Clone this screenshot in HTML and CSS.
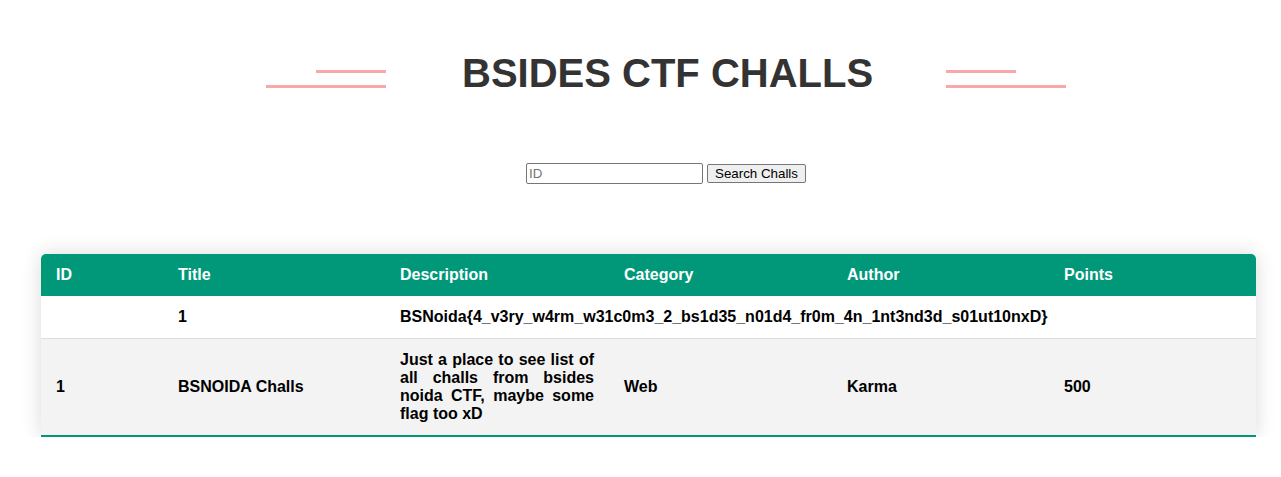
FILE: index.html
```html
<!DOCTYPE html>
<html lang="en">
<head>
<meta charset="utf-8">
<title>BSIDES CTF CHALLS</title>
<link rel="stylesheet" href="styles.css">
</head>
<body>
<header class="hero">
  <div class="deco deco-left"><span class="line short"></span><span class="line long"></span></div>
  <h1 class="title">BSIDES CTF CHALLS</h1>
  <div class="deco deco-right"><span class="line short"></span><span class="line long"></span></div>
</header>
<form class="search" onsubmit="return false">
  <input class="search-input" type="text" name="id" placeholder="ID">
  <button class="search-btn" type="submit">Search Challs</button>
</form>
<table class="styled-table">
  <colgroup>
    <col class="c-id"><col class="c-title"><col class="c-desc"><col class="c-cat"><col class="c-author"><col class="c-points">
  </colgroup>
  <thead>
    <tr><th>ID</th><th>Title</th><th>Description</th><th>Category</th><th>Author</th><th>Points</th></tr>
  </thead>
  <tbody>
    <tr><td></td><td>1</td><td class="flag">BSNoida{4_v3ry_w4rm_w31c0m3_2_bs1d35_n01d4_fr0m_4n_1nt3nd3d_s01ut10nxD}</td><td></td><td></td><td></td></tr>
    <tr><td>1</td><td>BSNOIDA Challs</td><td class="desc">Just a place to see list of all challs from bsides noida CTF, maybe some flag too xD</td><td>Web</td><td>Karma</td><td>500</td></tr>
  </tbody>
</table>
</body>
</html>
```
FILE: styles.css
```css
html, body {
  margin: 0;
  padding: 0;
  background: #fff;
}
body {
  font-family: "Liberation Sans", Arial, sans-serif;
  width: 1281px;
}
.hero {
  display: flex;
  justify-content: center;
  align-items: flex-start;
  gap: 76px;
  padding: 50px 0 0 51px;
}
.title {
  margin: 0;
  width: 408px;
  text-align: center;
  font-size: 40px;
  line-height: 46px;
  height: 46px;
  font-weight: bold;
  color: #333;
  white-space: nowrap;
}
.deco {
  display: flex;
  flex-direction: column;
  gap: 12px;
  width: 120px;
  margin-top: 20px;
}
.deco-left { align-items: flex-end; }
.deco-right { align-items: flex-start; }
.line {
  display: block;
  height: 3px;
  background: #f9a7a7;
}
.line.short { width: 70px; }
.line.long { width: 120px; }

.search {
  display: flex;
  justify-content: center;
  align-items: center;
  gap: 4px;
  margin: 67px 0 0 51px;
  height: 21px;
}
.search-input {
  box-sizing: border-box;
  width: 177px;
  height: 21px;
  padding: 1px 2px;
  font: 13.33px "Liberation Sans", Arial, sans-serif;
  border: 1px solid #767676;
  border-radius: 2px;
  color: #000;
  background: #fff;
}
.search-input::placeholder { color: #757575; }
.search-btn {
  box-sizing: border-box;
  width: 99px;
  height: 19px;
  padding: 0 6px;
  font: 13.33px "Liberation Sans", Arial, sans-serif;
  color: #000;
  background: #efefef;
  border: 1px solid #767676;
  border-radius: 2px;
  line-height: 15px;
}

.styled-table {
  margin: 70px 0 0 41px;
  width: 1215px;
  table-layout: fixed;
  border-collapse: collapse;
  font-size: 16px;
  font-weight: bold;
  border-radius: 5px 5px 0 0;
  overflow: hidden;
  box-shadow: 0 0 20px rgba(0, 0, 0, 0.15);
}
.c-id { width: 122px; }
.c-title { width: 222px; }
.c-desc { width: 224px; }
.c-cat { width: 223px; }
.c-author { width: 217px; }
.c-points { width: 207px; }
.styled-table thead tr {
  background: #009879;
  color: #fff;
  text-align: left;
}
.styled-table th,
.styled-table td {
  padding: 12px 15px;
  line-height: 18px;
}
.styled-table td { color: #000; }
.styled-table tbody tr { border-bottom: 1px solid #ddd; }
.styled-table tbody tr:nth-of-type(even) { background: #f3f3f3; }
.styled-table tbody tr:last-of-type { border-bottom: 2px solid #009879; }
.flag { white-space: nowrap; overflow: visible; }
.desc { text-align: justify; }
```
